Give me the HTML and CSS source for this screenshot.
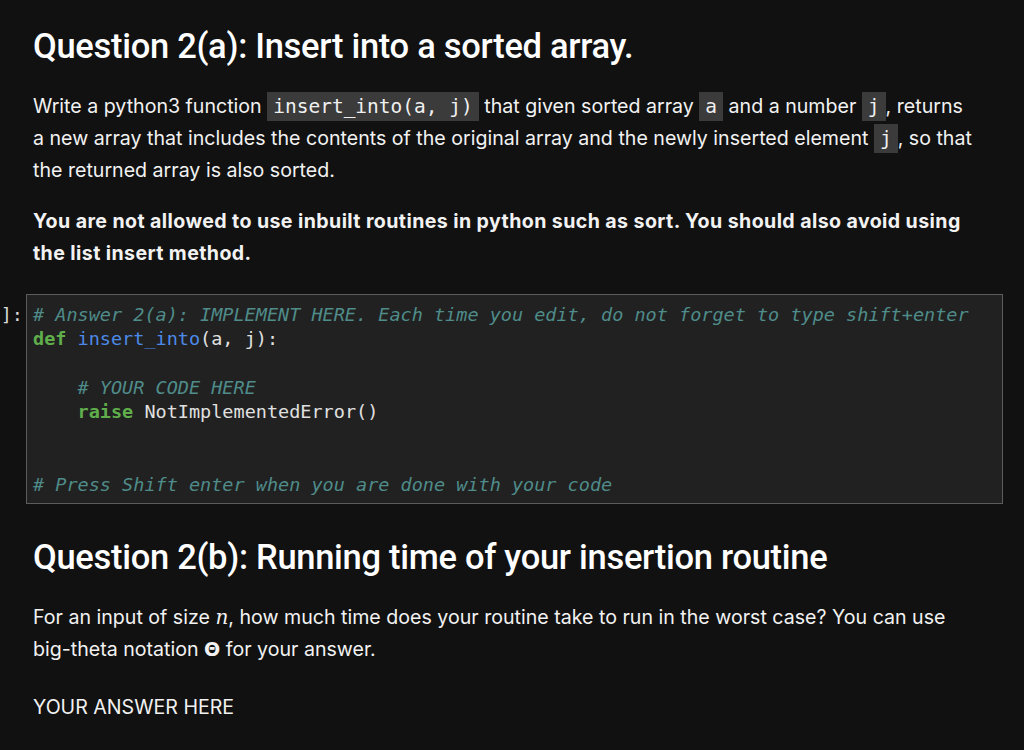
FILE: index.html
```html
<!DOCTYPE html>
<html>
<head>
<meta charset="utf-8">
<link rel="stylesheet" href="styles.css">
</head>
<body>
<div class="notebook">
  <div class="md">
    <h1 class="title">Question 2(a): Insert into a sorted array.</h1>
    <p>Write a python3 function <code>insert_into(a, j)</code> that given sorted array <code>a</code> and a number <code>j</code>, returns a new array that includes the contents of the original array and the newly inserted element <code>j</code>, so that the returned array is also sorted.</p>
    <p class="bold">You are not allowed to use inbuilt routines in python such as sort. You should also avoid using the list insert method.</p>
  </div>
  <div class="cell">
    <div class="prompt"><span>In&nbsp;[&nbsp;]:</span></div>
    <pre class="editor"><span class="c"># Answer 2(a): IMPLEMENT HERE. Each time you edit, do not forget to type shift+enter</span>
<span class="k">def</span> <span class="f">insert_into</span>(a, j):

    <span class="c"># YOUR CODE HERE</span>
    <span class="k">raise</span> NotImplementedError()


<span class="c"># Press Shift enter when you are done with your code</span></pre>
  </div>
  <div class="md">
    <h1 class="title second">Question 2(b): Running time of your insertion routine</h1>
    <p>For an input of size <span class="math">n</span>, how much time does your routine take to run in the worst case? You can use big-theta notation <span class="theta">Θ</span> for your answer.</p>
    <p class="answer">YOUR ANSWER HERE</p>
  </div>
</div>
</body>
</html>
```
FILE: styles.css
```css
html, body {
  margin: 0;
  padding: 0;
  background: #111111;
}
body {
  color: #f2f2f2;
  font-family: Inter, "Noto Sans", sans-serif;
}
.notebook {
  padding: 0 0 0 33px;
}
.md {
  width: 945px;
}
.title {
  font-family: Roboto, "Liberation Sans", sans-serif;
  font-weight: 500;
  font-size: 34.5px;
  line-height: 40px;
  margin: 26px 0 24px;
  color: #ffffff;
  letter-spacing: -0.3px;
}
.title.second {
  margin: 33px 0 24px;
}
p {
  font-size: 19.6px;
  line-height: 32px;
  margin: 0 0 19px;
}
p.bold {
  font-weight: 700;
  letter-spacing: 0.4px;
  margin-bottom: 25px;
}
p.answer {
  margin-top: 26px;
}
code {
  font-family: "DejaVu Sans Mono", monospace;
  font-size: 19.5px;
  line-height: 1;
  background: #3b3b3b;
  padding: 3px 6px;
  color: #f0f0f0;
}
.math {
  font-family: "DejaVu Serif", "Liberation Serif", serif;
  font-style: italic;
  font-size: 20px;
  line-height: 1;
}
.theta {
  font-family: "DejaVu Sans", sans-serif;
  font-weight: 700;
  font-size: 19px;
  line-height: 1;
}
.cell {
  display: flex;
  margin-left: -33px;
  margin-bottom: 0;
}
.prompt {
  width: 26px;
  flex: none;
  display: flex;
  justify-content: flex-end;
  overflow: visible;
  font-family: "DejaVu Sans Mono", monospace;
  font-size: 18.5px;
  line-height: 24.3px;
  padding-top: 9px;
  color: #d8d8d8;
  white-space: nowrap;
}
.prompt span {
  padding-right: 3px;
}
.editor {
  margin: 0;
  width: 969px;
  height: 196px;
  box-sizing: content-box;
  background: #212121;
  border: 1px solid #5c5c5c;
  padding: 8px 0 4px 6px;
  font-family: "DejaVu Sans Mono", monospace;
  font-size: 18.5px;
  line-height: 24.3px;
  color: #e0e0e0;
  overflow: hidden;
}
.c {
  color: #4f8c8a;
  font-style: italic;
}
.k {
  color: #5fae4b;
  font-weight: 700;
}
.f {
  color: #4d8ae8;
}
```
